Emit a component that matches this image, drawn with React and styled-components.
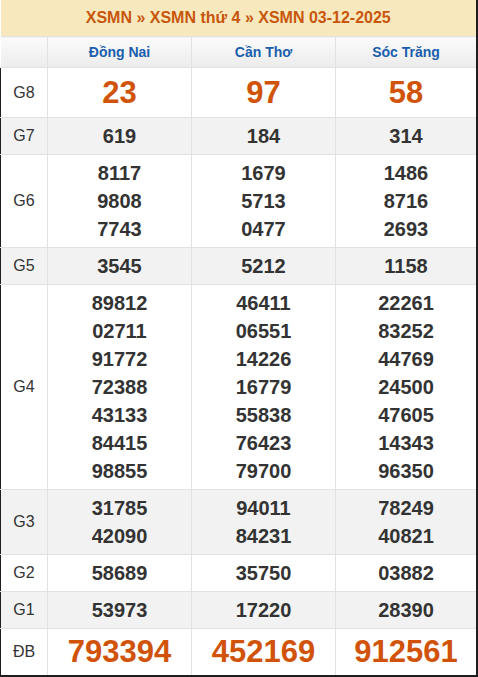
import React from "react";
import styled, { createGlobalStyle } from "styled-components";

const GlobalStyle = createGlobalStyle`
  body {
    margin: 0;
    background: #fff;
    font-family: "Liberation Sans", Arial, sans-serif;
  }
`;

export const Table = styled.table`
  width: 478px;
  table-layout: fixed;
  border-collapse: collapse;
  font-family: "Liberation Sans", Arial, sans-serif;
  color: #333;
  border-right: 2px solid #1e1e1e;
  border-bottom: 2px solid #1e1e1e;
`;

export const TitleCell = styled.th`
  height: 36px;
  padding: 0;
  background: #f7e9bd;
  color: #c8560d;
  font-size: 16px;
  font-weight: bold;
  text-align: center;
  border-bottom: 1px solid #e2e2e2;
`;

export const HeadCell = styled.th`
  height: 30px;
  padding: 0;
  background: linear-gradient(#fbfbfb, #ececec);
  color: #1a5ead;
  font-size: 14px;
  font-weight: bold;
  text-align: center;
  border-left: 1px solid #e2e2e2;
  border-bottom: 1px solid #e2e2e2;
  &:first-child {
    border-left: none;
  }
`;

export const Row = styled.tr`
  background: ${({ $alt }) => ($alt ? "#f2f2f2" : "#fff")};
`;

export const Label = styled.td`
  padding: 0;
  text-align: center;
  font-size: 16px;
  color: #333;
  border-left: 1px solid #1e1e1e;
  border-bottom: 1px solid #e2e2e2;
`;

export const Cell = styled.td`
  padding: 4px 0;
  text-align: center;
  border-left: 1px solid #e2e2e2;
  border-bottom: 1px solid #e2e2e2;
`;

export const Num = styled.div`
  font-weight: bold;
  font-size: ${({ $big }) => ($big ? "31px" : "20px")};
  line-height: ${({ $big }) => ($big ? `${$big}px` : "28px")};
  color: ${({ $big }) => ($big ? "#d05309" : "#333")};
`;

const provinces = ["Đồng Nai", "Cần Thơ", "Sóc Trăng"];

const prizes = [
  { name: "G8", big: 41, vals: [["23"], ["97"], ["58"]] },
  { name: "G7", vals: [["619"], ["184"], ["314"]] },
  {
    name: "G6",
    vals: [
      ["8117", "9808", "7743"],
      ["1679", "5713", "0477"],
      ["1486", "8716", "2693"],
    ],
  },
  { name: "G5", vals: [["3545"], ["5212"], ["1158"]] },
  {
    name: "G4",
    vals: [
      ["89812", "02711", "91772", "72388", "43133", "84415", "98855"],
      ["46411", "06551", "14226", "16779", "55838", "76423", "79700"],
      ["22261", "83252", "44769", "24500", "47605", "14343", "96350"],
    ],
  },
  {
    name: "G3",
    vals: [
      ["31785", "42090"],
      ["94011", "84231"],
      ["78249", "40821"],
    ],
  },
  { name: "G2", vals: [["58689"], ["35750"], ["03882"]] },
  { name: "G1", vals: [["53973"], ["17220"], ["28390"]] },
  { name: "ĐB", big: 38, vals: [["793394"], ["452169"], ["912561"]] },
];

export default function App() {
  return (
    <>
      <GlobalStyle />
      <Table>
        <colgroup>
          <col style={{ width: 47 }} />
          <col style={{ width: 144 }} />
          <col style={{ width: 144 }} />
          <col />
        </colgroup>
        <thead>
          <tr>
            <TitleCell colSpan={4}>XSMN » XSMN thứ 4 » XSMN 03-12-2025</TitleCell>
          </tr>
          <tr>
            <HeadCell />
            {provinces.map(p => (
              <HeadCell key={p}>{p}</HeadCell>
            ))}
          </tr>
        </thead>
        <tbody>
          {prizes.map((prize, i) => (
            <Row key={prize.name} $alt={i % 2 === 1}>
              <Label>{prize.name}</Label>
              {prize.vals.map((list, j) => (
                <Cell key={j}>
                  {list.map((v, k) => (
                    <Num key={k} $big={prize.big}>
                      {v}
                    </Num>
                  ))}
                </Cell>
              ))}
            </Row>
          ))}
        </tbody>
      </Table>
    </>
  );
}
